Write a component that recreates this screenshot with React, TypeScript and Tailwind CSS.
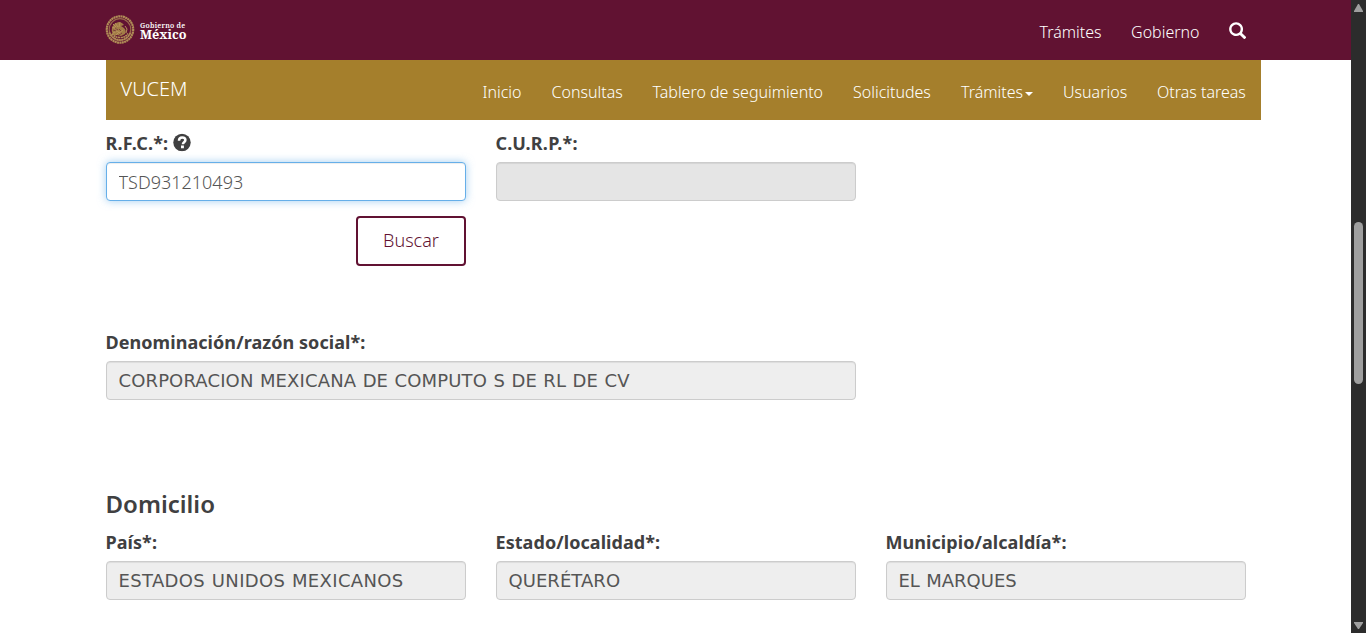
import React from "react";

const navItems = ["Inicio", "Consultas", "Tablero de seguimiento", "Solicitudes", "Trámites", "Usuarios", "Otras tareas"];
const navWidths = ["w-[69px]", "w-[101px]", "w-[200.500px]", "w-[108px]", "w-[102px]", "w-[94px]", "w-[119px]"];

function Seal() {
  return (
    <svg className="h-[30px] w-[30px] shrink-0" viewBox="0 0 30 30" fill="none" stroke="#b08d57">
      <circle cx="15" cy="14.500" r="13.200" strokeWidth="2.200" strokeDasharray="2 .4" />
      <circle cx="15" cy="14.500" r="10.800" strokeWidth="1.200" opacity=".7" />
      <path d="M7 17c-1-5 2-9 7-10l3 1 2 2-3 1 3 2c2 2 2 4 1 6l-4 2-4-1-3 1-2-4Z" fill="#a27c46" stroke="none" />
      <path d="M8 9l3 3M7 12l5 2M10 8l3 4M15 7l-1 5M20 11l2 3-1 4M8 18l4-2 4 3M11 20l3-3M18 15l-4 3" stroke="#b8925b" strokeWidth="1" />
      <path d="M10 13l3 2M14 14l2 2M8 15l3 1M17 18l-3 2" stroke="#611232" strokeWidth=".6" />
      <path d="M4.500 17.500c2 5 6 7.500 10.500 7.500s8.500-2.500 10.500-7.500M7 18.500c2 3 4 4 8 4s6-1 8-4" strokeWidth="1.700" strokeDasharray="2 .5" />
    </svg>
  );
}

function SearchIcon() {
  return (
    <svg className="h-[17px] w-[17px]" viewBox="0 0 1200 1200" fill="white">
      <path transform="translate(0 1200) scale(1 -1)" d="M500 1191q100 0 191 -39t156.500 -104.500t104.500 -156.500t39 -191l-1 -2l1 -5q0 -141 -78 -262l275 -274q23 -26 22.500 -44.500t-22.500 -42.500l-59 -58q-26 -20 -46.500 -20t-39.500 20l-275 274q-119 -77 -261 -77l-5 1l-2 -1q-100 0 -191 39t-156.500 104.500t-104.500 156.500t-39 191t39 191t104.500 156.500t156.500 104.500t191 39zM500 1022q-88 0 -162 -43t-117 -117t-43 -162t43 -162t117 -117t162 -43t162 43t117 117t43 162t-43 162t-117 117t-162 43z" />
    </svg>
  );
}

function HelpIcon() {
  return (
    <svg className="ml-[5px] h-[18px] w-[18px] -translate-y-[1.500px]" viewBox="0 0 18 18">
      <circle cx="9" cy="9" r="8.700" fill="#404041" />
      <path d="M6 7.300C6 4.800 7.200 3.900 9.100 3.900c2 0 3.300 1 3.300 2.700 0 2.200-2.500 2.200-2.500 4.100" fill="none" stroke="white" strokeWidth="2.500" />
      <path d="M8 12h2.900v2.800H8z" fill="white" />
    </svg>
  );
}

function Label({ children }: { children: React.ReactNode }) {
  return <div className="-ml-[0.500px] flex h-[25px] items-center whitespace-nowrap text-[18px] font-bold leading-[25px] tracking-[0.06px]">{children}</div>;
}

function ReadOnly({ value, spacing = "tracking-normal" }: { value: string; spacing?: string }) {
  return (
    <input
      readOnly
      value={value}
      className={`mt-[6px] block h-[39px] w-full rounded-[4px] border border-[#ccc] bg-[#eee] px-[11.500px] font-['Verdana','DejaVu_Sans',sans-serif] text-[18px] text-[#555] shadow-[inset_0_1px_1px_rgba(0,0,0,0.075)] outline-none [word-spacing:0.6px] ${spacing}`}
    />
  );
}

export default function App() {
  return (
    <div className="flex h-[633px] w-[1366px] overflow-hidden bg-white font-['Noto_Sans','Open_Sans',sans-serif] text-[#404041]">
      <div className="flex w-[1351px] flex-col">
        <header className="flex h-[60px] items-center bg-[#611232] pl-[105px] pr-[105px] font-light text-white">
          <Seal />
          <div className="ml-[5px] flex flex-col font-['Noto_Serif','Liberation_Serif',serif]">
            <span className="text-[7px] font-semibold leading-[9px] tracking-[0.25px]">Gobierno de</span>
            <span className="-mt-px text-[12.700px] font-bold leading-[11px]">México</span>
          </div>
          <div className="ml-auto flex items-center gap-[30px] pt-[4px] text-[16px]">
            <span className="-mr-[0.500px]">Trámites</span>
            <span className="-mr-[0.500px]">Gobierno</span>
            <span className="-mt-[3px]"><SearchIcon /></span>
          </div>
        </header>
        <nav className="ml-[106px] flex h-[60px] w-[1155px] items-center bg-[#a57f2c] pl-[14.500px] font-light text-white">
          <span className="pb-[2px] text-[20px]">VUCEM</span>
          <div className="ml-auto flex pt-[4px] text-[16px]">
            {navItems.map((item, i) => (
              <span key={item} className={`flex shrink-0 items-center whitespace-nowrap pl-[15px] ${navWidths[i]}`}>
                {item}
                {item === "Trámites" && <i className="ml-[2px] mt-[4px] border-x-4 border-t-4 border-x-transparent border-t-white" />}
              </span>
            ))}
          </div>
        </nav>
        <main className="ml-[106px] w-[1140px]">
          <div className="grid grid-cols-3 gap-[30px] pt-[11px]">
            <div className="flex flex-col">
              <Label><span className="tracking-[0.2px]">R.F.C.*:</span><HelpIcon /></Label>
              <input
                defaultValue="TSD931210493"
                className="mt-[6px] block h-[39px] w-full rounded-[4px] border border-[#66afe9] bg-white px-[11.500px] text-[18px] font-light text-[#555] shadow-[inset_0_1px_1px_rgba(0,0,0,0.075),0_0_8px_rgba(102,175,233,0.6)] outline-none"
              />
              <button className="mt-[15px] h-[50px] w-[110px] self-end rounded-[4px] border-2 border-[#611232] bg-white pb-[2px] text-[18px] font-light text-[#611232]">Buscar</button>
            </div>
            <div>
              <Label><span className="tracking-[0.2px]">C.U.R.P.*:</span></Label>
              <div className="mt-[6px] h-[39px] rounded-[4px] border border-[#ccc] bg-[#e5e5e5] shadow-[inset_0_1px_1px_rgba(0,0,0,0.075)]" />
            </div>
          </div>
          <div className="mt-[64px] w-[750px]">
            <Label>Denominación/razón social*:</Label>
            <ReadOnly value="CORPORACION MEXICANA DE COMPUTO S DE RL DE CV" spacing="tracking-[0.13px]" />
          </div>
          <h4 className="-ml-[0.500px] mt-[88px] h-[32px] text-[24px] font-semibold leading-[32px]">Domicilio</h4>
          <div className="mt-[10px] grid grid-cols-3 gap-[30px]">
            <div><Label>País*:</Label><ReadOnly value="ESTADOS UNIDOS MEXICANOS" spacing="tracking-[0.35px]" /></div>
            <div><Label>Estado/localidad*:</Label><ReadOnly value="QUERÉTARO" spacing="tracking-[0.05px]" /></div>
            <div><Label>Municipio/alcaldía*:</Label><ReadOnly value="EL MARQUES" /></div>
          </div>
        </main>
      </div>
      <aside className="flex w-[15px] flex-col items-center bg-[#2c2c2c]">
        <svg className="mt-[4px] h-[8px] w-[9px]" viewBox="0 0 9 8"><path d="M4 0h1l4 7v1H0V7Z" fill="#9f9f9f" /></svg>
        <div className="mt-[210px] h-[162px] w-[9px] rounded-full bg-[#9f9f9f]" />
        <svg className="mt-[238px] h-[7px] w-[9px]" viewBox="0 0 9 7"><path d="M0 0h9v1L5 7H4L0 1Z" fill="#9f9f9f" /></svg>
      </aside>
    </div>
  );
}
